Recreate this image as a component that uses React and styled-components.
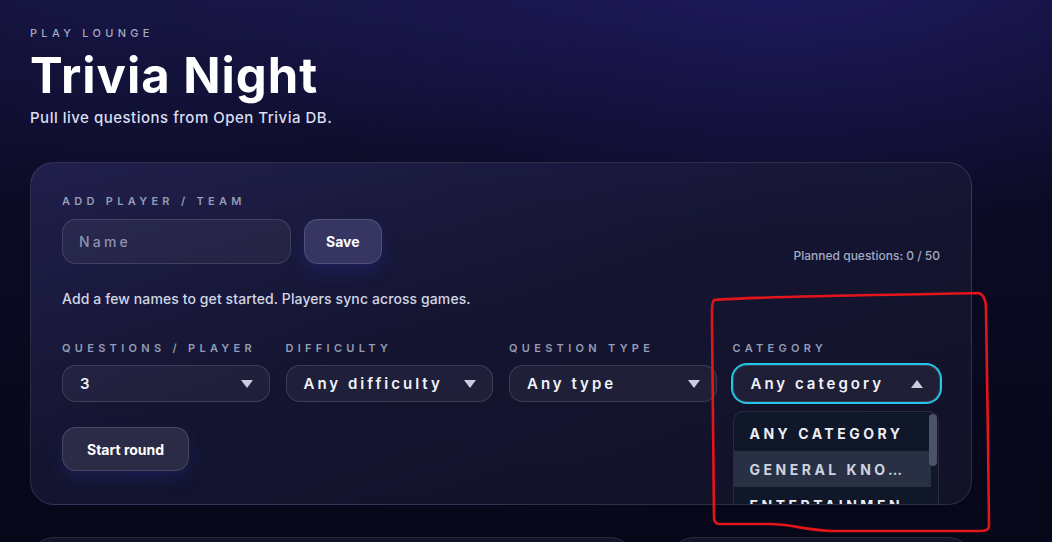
import React from "react";
import styled, { createGlobalStyle } from "styled-components";

const Global = createGlobalStyle`
  html, body { margin: 0; padding: 0; }
  body {
    font-family: Inter, "Noto Sans", sans-serif;
    background: #070818;
    color: #fff;
    overflow: hidden;
  }
  * { box-sizing: border-box; }
`;

const Page = styled.div`
  position: relative;
  width: 1052px;
  height: 542px;
  overflow: hidden;
  padding: 26px 30px 0;
  background:
    radial-gradient(ellipse 900px 420px at 780px -60px, rgba(36, 30, 110, 0.85), rgba(36, 30, 110, 0) 70%),
    radial-gradient(ellipse 700px 400px at 150px -80px, rgba(28, 26, 80, 0.9), rgba(28, 26, 80, 0) 75%),
    linear-gradient(180deg, #0e0d2c 0%, #0a0a22 50%, #060718 100%);
`;

const Header = styled.header`
  display: flex;
  flex-direction: column;
`;

const Eyebrow = styled.div`
  font-size: 11px;
  font-weight: 500;
  letter-spacing: 4.3px;
  color: #a3abc2;
  line-height: 14px;
`;

const Title = styled.h1`
  margin: 8px 0 0;
  font-size: 49px;
  font-weight: 700;
  letter-spacing: 1px;
  line-height: 56px;
  color: #ffffff;
`;

const Subtitle = styled.p`
  margin: 4px 0 0;
  font-size: 15px;
  font-weight: 500;
  letter-spacing: 0.5px;
  color: #d9def0;
  line-height: 20px;
`;

const Card = styled.section`
  margin-top: 34px;
  width: 942px;
  height: 343px;
  border-radius: 24px;
  border: 1px solid rgba(255, 255, 255, 0.11);
  background: linear-gradient(160deg, rgba(40, 38, 88, 0.75) 0%, rgba(26, 26, 58, 0.7) 45%, rgba(20, 21, 42, 0.85) 100%);
  padding: 31px 31px 0;
  overflow: hidden;
  display: flex;
  flex-direction: column;
`;

const Label = styled.div`
  font-size: 11px;
  font-weight: 600;
  letter-spacing: 4.3px;
  color: #949cb5;
  line-height: 14px;
  text-transform: uppercase;
  white-space: nowrap;
`;

const TopRow = styled.div`
  display: flex;
  align-items: flex-end;
  justify-content: space-between;
`;

const AddBlock = styled.div`
  display: flex;
  flex-direction: column;
  gap: 11px;
`;

const InputRow = styled.div`
  display: flex;
  gap: 13px;
`;

const NameInput = styled.div`
  width: 229px;
  height: 45px;
  border-radius: 14px;
  border: 1px solid rgba(255, 255, 255, 0.13);
  background: rgba(255, 255, 255, 0.05);
  display: flex;
  align-items: center;
  padding-left: 16px;
  font-size: 14px;
  font-weight: 500;
  letter-spacing: 3.2px;
  color: #8d93ad;
`;

const Button = styled.button`
  height: ${(p) => p.$h || 45}px;
  padding: 0 ${(p) => p.$px || 20}px;
  border-radius: 14px;
  border: 1px solid rgba(255, 255, 255, 0.14);
  background: ${(p) => p.$bg || "rgba(80, 78, 130, 0.55)"};
  color: #fff;
  font-family: inherit;
  font-size: 14px;
  font-weight: 700;
  box-shadow: 0 8px 18px rgba(40, 60, 180, 0.22);
`;

const Planned = styled.div`
  font-size: 12px;
  font-weight: 500;
  color: #a3abc2;
  margin-bottom: 1px;
`;

const Hint = styled.p`
  margin: 26px 0 0;
  font-size: 14px;
  font-weight: 500;
  letter-spacing: 0.1px;
  color: #d2d7e6;
  line-height: 18px;
`;

const Fields = styled.div`
  margin-top: 33px;
  display: grid;
  grid-template-columns: repeat(4, 1fr);
  gap: 16px;
`;

const Field = styled.div`
  position: relative;
  display: flex;
  flex-direction: column;
  gap: 10px;
`;

const Select = styled.div`
  height: 37px;
  border-radius: 14px;
  border: 1px solid rgba(255, 255, 255, 0.13);
  background: rgba(255, 255, 255, 0.05);
  display: flex;
  align-items: center;
  justify-content: space-between;
  padding: 0 16px 0 17px;
  font-size: 15px;
  font-weight: 600;
  letter-spacing: ${(p) => (p.$spaced ? 3 : 0)}px;
  color: #f1f3fa;
  box-shadow: ${(p) => (p.$focus ? "0 0 0 2px #22c7e6" : "none")};
`;

const Arrow = styled.span`
  width: 0;
  height: 0;
  border-left: 6px solid transparent;
  border-right: 6px solid transparent;
  ${(p) => (p.$up ? "border-bottom" : "border-top")}: 8px solid #c9cde0;
`;

const List = styled.div`
  position: absolute;
  top: 70px;
  left: 0;
  width: 206px;
  height: 120px;
  border-radius: 10px;
  border: 1px solid rgba(255, 255, 255, 0.1);
  background: #101729;
  padding: 3px 0;
  overflow: hidden;
`;

const Item = styled.div`
  height: 36px;
  width: 197px;
  display: flex;
  align-items: center;
  padding-left: 16px;
  font-size: 14px;
  font-weight: 700;
  letter-spacing: 3.5px;
  color: ${(p) => (p.$active ? "#cfd3e0" : "#eceef5")};
  background: ${(p) => (p.$active ? "#2a3043" : "transparent")};
  white-space: nowrap;
`;

const Scroll = styled.div`
  position: absolute;
  right: 1px;
  top: 2px;
  width: 8px;
  height: 52px;
  border-radius: 4px;
  background: #4a5367;
`;

const Actions = styled.div`
  margin-top: 25px;
`;

const Lower = styled.div`
  margin-top: 32px;
  width: 942px;
  display: grid;
  grid-template-columns: 2fr 1fr;
  gap: 36px;
`;

const LowerCard = styled.div`
  height: 60px;
  border-radius: 24px;
  border: 1px solid rgba(255, 255, 255, 0.1);
  background: rgba(30, 30, 60, 0.5);
`;

const Annotation = styled.svg`
  position: absolute;
  left: 0;
  top: 0;
  pointer-events: none;
`;

export default function App() {
  return (
    <Page>
      <Global />
      <Header>
        <Eyebrow>PLAY LOUNGE</Eyebrow>
        <Title>Trivia Night</Title>
        <Subtitle>Pull live questions from Open Trivia DB.</Subtitle>
      </Header>
      <Card>
        <TopRow>
          <AddBlock>
            <Label>Add player / team</Label>
            <InputRow>
              <NameInput>Name</NameInput>
              <Button $px={21}>Save</Button>
            </InputRow>
          </AddBlock>
          <Planned>Planned questions: 0 / 50</Planned>
        </TopRow>
        <Hint>Add a few names to get started. Players sync across games.</Hint>
        <Fields>
          <Field>
            <Label>Questions / player</Label>
            <Select>
              <span>3</span>
              <Arrow />
            </Select>
          </Field>
          <Field>
            <Label>Difficulty</Label>
            <Select $spaced>
              <span>Any difficulty</span>
              <Arrow />
            </Select>
          </Field>
          <Field>
            <Label>Question type</Label>
            <Select $spaced>
              <span>Any type</span>
              <Arrow />
            </Select>
          </Field>
          <Field>
            <Label>Category</Label>
            <Select $spaced $focus>
              <span>Any category</span>
              <Arrow $up />
            </Select>
            <List>
              <Item>ANY CATEGORY</Item>
              <Item $active>GENERAL KNO…</Item>
              <Item>ENTERTAINMEN</Item>
              <Scroll />
            </List>
          </Field>
        </Fields>
        <Actions>
          <Button $px={24} $h={44} $bg="rgba(70, 70, 100, 0.45)">Start round</Button>
        </Actions>
      </Card>
      <Lower>
        <LowerCard />
        <LowerCard />
      </Lower>
      <Annotation width="1052" height="542" viewBox="0 0 1052 542">
        <path
          d="M714 300 C 760 296, 900 295, 978 293 C 984 294, 986 300, 986 310 L 988 440 L 989 526 C 989 530, 986 531, 980 531 L 830 531 C 800 529, 790 524, 770 524 L 720 524 C 716 524, 714 522, 714 518 L 712 320 C 712 306, 712 302, 714 300 Z"
          fill="none"
          stroke="#e4141b"
          strokeWidth="2.6"
          strokeLinejoin="round"
        />
      </Annotation>
    </Page>
  );
}
